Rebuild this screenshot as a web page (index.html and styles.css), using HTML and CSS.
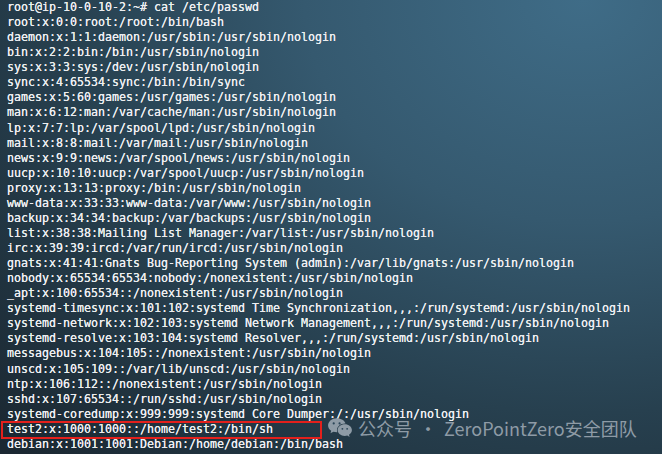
FILE: index.html
```html
<!DOCTYPE html>
<html lang="en">
<head>
    <meta charset="UTF-8">
    <title>cat /etc/passwd</title>
    <link rel="stylesheet" href="styles.css">
</head>
<body>
    <div class="terminal">
        <div class="line">root@ip-10-0-10-2:~# cat /etc/passwd</div>
        <div class="line">root:x:0:0:root:/root:/bin/bash</div>
        <div class="line">daemon:x:1:1:daemon:/usr/sbin:/usr/sbin/nologin</div>
        <div class="line">bin:x:2:2:bin:/bin:/usr/sbin/nologin</div>
        <div class="line">sys:x:3:3:sys:/dev:/usr/sbin/nologin</div>
        <div class="line">sync:x:4:65534:sync:/bin:/bin/sync</div>
        <div class="line">games:x:5:60:games:/usr/games:/usr/sbin/nologin</div>
        <div class="line">man:x:6:12:man:/var/cache/man:/usr/sbin/nologin</div>
        <div class="line">lp:x:7:7:lp:/var/spool/lpd:/usr/sbin/nologin</div>
        <div class="line">mail:x:8:8:mail:/var/mail:/usr/sbin/nologin</div>
        <div class="line">news:x:9:9:news:/var/spool/news:/usr/sbin/nologin</div>
        <div class="line">uucp:x:10:10:uucp:/var/spool/uucp:/usr/sbin/nologin</div>
        <div class="line">proxy:x:13:13:proxy:/bin:/usr/sbin/nologin</div>
        <div class="line">www-data:x:33:33:www-data:/var/www:/usr/sbin/nologin</div>
        <div class="line">backup:x:34:34:backup:/var/backups:/usr/sbin/nologin</div>
        <div class="line">list:x:38:38:Mailing List Manager:/var/list:/usr/sbin/nologin</div>
        <div class="line">irc:x:39:39:ircd:/var/run/ircd:/usr/sbin/nologin</div>
        <div class="line">gnats:x:41:41:Gnats Bug-Reporting System (admin):/var/lib/gnats:/usr/sbin/nologin</div>
        <div class="line">nobody:x:65534:65534:nobody:/nonexistent:/usr/sbin/nologin</div>
        <div class="line">_apt:x:100:65534::/nonexistent:/usr/sbin/nologin</div>
        <div class="line">systemd-timesync:x:101:102:systemd Time Synchronization,,,:/run/systemd:/usr/sbin/nologin</div>
        <div class="line">systemd-network:x:102:103:systemd Network Management,,,:/run/systemd:/usr/sbin/nologin</div>
        <div class="line">systemd-resolve:x:103:104:systemd Resolver,,,:/run/systemd:/usr/sbin/nologin</div>
        <div class="line">messagebus:x:104:105::/nonexistent:/usr/sbin/nologin</div>
        <div class="line">unscd:x:105:109::/var/lib/unscd:/usr/sbin/nologin</div>
        <div class="line">ntp:x:106:112::/nonexistent:/usr/sbin/nologin</div>
        <div class="line">sshd:x:107:65534::/run/sshd:/usr/sbin/nologin</div>
        <div class="line">systemd-coredump:x:999:999:systemd Core Dumper:/:/usr/sbin/nologin</div>
        <div class="line marked">test2:x:1000:1000::/home/test2:/bin/sh</div>
        <div class="line">debian:x:1001:1001:Debian:/home/debian:/bin/bash</div>
        <div class="line">root@ip-10-0-10-2:~# <span class="cursor"></span></div>
    </div>

    <div class="watermark">
        <svg class="wechat" width="26" height="22" viewBox="0 0 24 20">
            <path d="M9 1C4.6 1 1 4 1 7.6c0 2 1.1 3.8 2.9 5l-.7 2.3 2.7-1.4c1 .3 2 .4 3.1.4h.5c-.2-.6-.3-1.200-.3-1.9 0-3.4 3.3-6.1 7.4-6.1h.5C16.4 3.2 13 1 9 1z" fill="#8e9ba6"/>
            <path d="M23 11.9c0-3-3-5.4-6.6-5.4s-6.6 2.4-6.6 5.4 3 5.4 6.6 5.4c.8 0 1.6-.1 2.3-.3l2.2 1.2-.6-1.9c1.6-1.1 2.7-2.6 2.7-4.4z" fill="#8e9ba6"/>
            <circle cx="6.2" cy="5.8" r="1" fill="#2b4658"/>
            <circle cx="11.6" cy="5.8" r="1" fill="#2b4658"/>
            <circle cx="14.2" cy="10.8" r=".85" fill="#2b4658"/>
            <circle cx="18.6" cy="10.8" r=".85" fill="#2b4658"/>
        </svg>
        <span class="wm-text">公众号 · ZeroPointZero安全团队</span>
    </div>
</body>
</html>
```

FILE: styles.css
```css
html, body {
    margin: 0;
    height: 100%;
}
body {
    width: 662px;
    height: 454px;
    overflow: hidden;
    position: relative;
    background: radial-gradient(ellipse 120% 140% at 88% 0%, #3f6c87 0%, #35596f 35%, #27404f 65%, #1b2832 100%);
}
.terminal {
    padding: 0 0 0 7px;
    font-family: "DejaVu Sans Mono", "Liberation Mono", monospace;
    font-size: 11.63px;
    color: #eceef0;
    text-shadow: 0 0 0.4px #ffffff;
}
.line {
    height: 15.07px;
    line-height: 15.07px;
    white-space: pre;
}
.marked {
    position: relative;
}
.marked::after {
    content: "";
    position: absolute;
    left: -6px;
    top: -1px;
    width: 321px;
    height: 18px;
    border: 2px solid #e3201c;
    box-sizing: border-box;
}
.cursor {
    display: inline-block;
    width: 7px;
    height: 9px;
    background: #1fd35a;
    vertical-align: -1px;
}
.watermark {
    position: absolute;
    left: 327px;
    top: 417px;
    display: flex;
    align-items: center;
    gap: 5px;
}
.wm-text {
    font-family: "Noto Sans CJK SC", "Noto Sans", sans-serif;
    font-size: 18px;
    line-height: 22px;
    word-spacing: 3px;
    color: #8e9ba6;
}
```
